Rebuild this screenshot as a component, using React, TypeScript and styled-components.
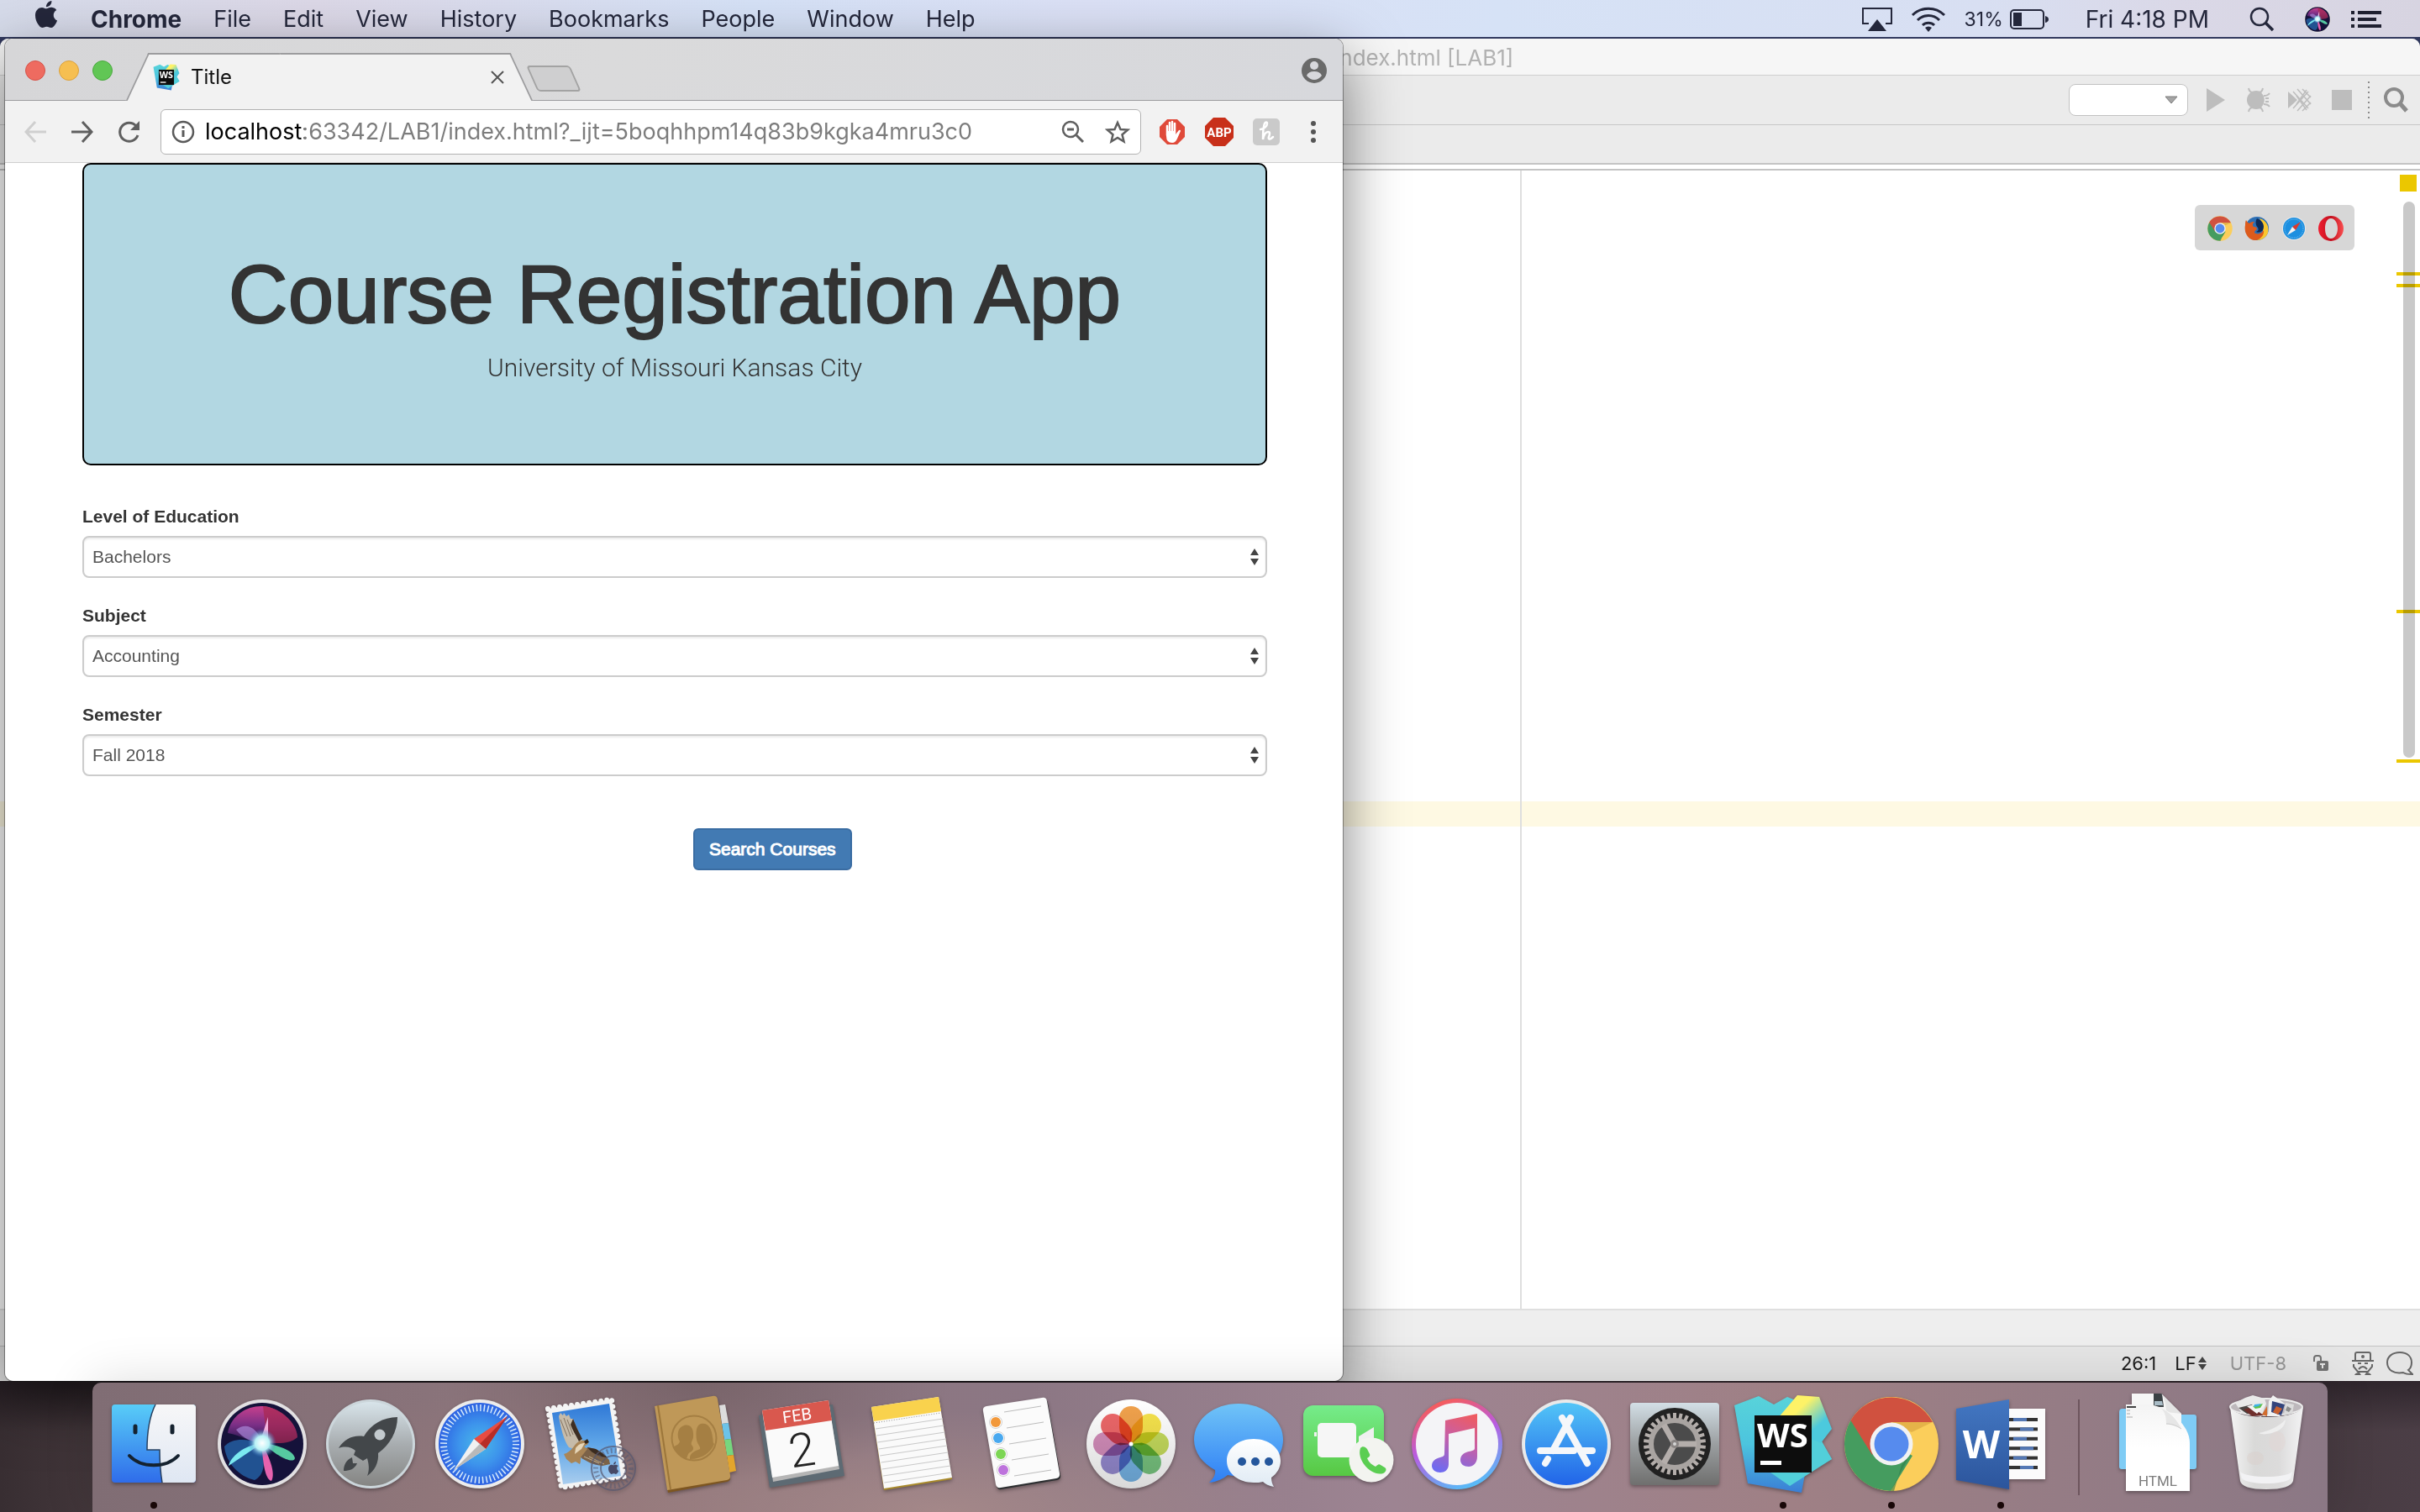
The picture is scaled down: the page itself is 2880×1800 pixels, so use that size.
import React from 'react';
import styled, { createGlobalStyle } from 'styled-components';

const systemFont = 'Inter, "Noto Sans", sans-serif';
const pageFont = '"Liberation Sans", Arial, sans-serif';

const GlobalStyle = createGlobalStyle`
  *, *::before, *::after { box-sizing: border-box; }
  body { margin: 0; font-family: ${systemFont}; }
  button, input, select { font: inherit; color: inherit; margin: 0; }
`;

/* ---------- desktop ---------- */

const Desktop = styled.div`
  position: relative;
  height: 100vh;
  overflow: hidden;
  display: flex;
  flex-direction: column;
  justify-content: space-between;
  background:
    linear-gradient(180deg, rgba(20, 14, 20, 0.5) 0, rgba(20, 14, 20, 0) 60px) bottom / 100% 156px no-repeat,
    linear-gradient(90deg, #382e32 0, #43373b 4%, #43373b 90%, #4b3e46 100%) bottom / 100% 156px no-repeat,
    linear-gradient(180deg, #34416c 0, #2b2a45 120px, #2b2328 100%);
`;

const MenuBar = styled.header`
  height: 44px;
  padding: 2px 46px 0 40px;
  display: flex;
  align-items: center;
  justify-content: space-between;
  color: #24273b;
  font-size: 27px;
  line-height: 42px;
  background: linear-gradient(90deg, #d6dbea 0, #dcd8e7 13%, #d5e1f6 31%, #dbe0f5 45%, #d6e2f6 62%, #d8dff2 82%, #dad8e7 90%, #d7d4e1 100%);
`;

const MenuList = styled.nav`
  display: flex;
  align-items: center;
  gap: 38px;
`;

const MenuItem = styled.button<{ $strong?: boolean }>`
  border: 0;
  padding: 0;
  background: none;
  line-height: 42px;
  font-size: ${(p) => (p.$strong ? 28 : 27)}px;
  font-weight: ${(p) => (p.$strong ? 700 : 400)};
`;

const StatusList = styled.div`
  display: flex;
  align-items: center;
`;

const StatusItem = styled.span<{ $after: number; $muted?: boolean; $gap?: number }>`
  display: flex;
  align-items: center;
  gap: ${(p) => p.$gap ?? 8}px;
  margin-right: ${(p) => p.$after}px;
  color: ${(p) => (p.$muted ? '#979797' : 'inherit')};
`;

const Small = styled.span`
  font-size: 23px;
`;

const Clock = styled.time`
  font-size: 28px;
`;

/* ---------- editor window ---------- */

const EditorWindow = styled.section`
  position: absolute;
  inset: 46px 0 156px 0;
  display: flex;
  flex-direction: column;
  border-radius: 10px 10px 0 0;
  overflow: hidden;
  background: #fff;
`;

const EditorTitle = styled.div`
  height: 44px;
  padding-left: 1588px;
  border-bottom: 1px solid #cfcfcf;
  background: #f6f6f6;
  color: #b2b2b2;
  font-size: 26px;
  line-height: 46px;
`;

const EditorToolbar = styled.div`
  height: 59px;
  padding: 0 4px;
  display: flex;
  align-items: center;
  justify-content: flex-end;
  border-bottom: 1px solid #c6c6c6;
  background: #ebebeb;
`;

const ConfigBox = styled.div`
  display: grid;
  width: 142px;
  height: 38px;
  margin-right: 8px;
  > * { grid-area: 1 / 1; }
  > svg { justify-self: end; align-self: center; margin-right: 12px; pointer-events: none; }
`;

const ConfigSelect = styled.select`
  appearance: none;
  border: 1px solid #c2c2c2;
  border-radius: 8px;
  background: #fff;
`;

const EditorTool = styled.button`
  width: 50px;
  height: 40px;
  border: 0;
  padding: 0;
  background: none;
  display: grid;
  place-items: center;
`;

const DottedRule = styled.span`
  width: 2px;
  height: 44px;
  margin: 0 6px;
  background: repeating-linear-gradient(180deg, #8c8c8c 0 2px, transparent 2px 6px);
`;

const EditorTabs = styled.div`
  height: 47px;
  border-bottom: 2px solid #c4c4c4;
  background: #ebebeb;
`;

const EditorGap = styled.div`
  height: 7px;
  border-bottom: 2px solid #c4c4c4;
`;

const EditorBody = styled.div`
  position: relative;
  flex: 1;
`;

const CaretRow = styled.div`
  position: absolute;
  inset: 751px 0 auto 0;
  height: 30px;
  background: #fef9e3;
`;

const MarginGuide = styled.div`
  position: absolute;
  inset: 0 auto 0 1809px;
  width: 2px;
  background: #dedede;
`;

const BrowserPanel = styled.div`
  position: absolute;
  top: 41px;
  right: 78px;
  padding: 13px 12px 11px 14px;
  display: flex;
  gap: 12px;
  border-radius: 6px;
  background: #d7d7d7;
`;

const PanelButton = styled.button`
  width: 32px;
  height: 30px;
  border: 0;
  padding: 0;
  background: none;
  display: grid;
  place-items: center;
`;

const ScrollThumb = styled.div`
  position: absolute;
  top: 37px;
  right: 6px;
  width: 14px;
  height: 662px;
  border-radius: 7px;
  background: #c9c9c9;
`;

const StatusSquare = styled.div`
  position: absolute;
  top: 5px;
  right: 4px;
  width: 20px;
  height: 20px;
  background: #ebc700;
`;

const Mark = styled.div<{ $top: number }>`
  position: absolute;
  top: ${(p) => p.$top}px;
  right: 0;
  width: 28px;
  height: 4px;
  background: #ebc700;
  mix-blend-mode: multiply;
`;

const EditorPanelBar = styled.div`
  height: 45px;
  border-top: 2px solid #dfdfdf;
  border-bottom: 1px solid #c2c2c2;
  background: #eeeeee;
`;

const EditorStatus = styled.footer`
  height: 41px;
  padding-right: 8px;
  display: flex;
  align-items: center;
  justify-content: flex-end;
  border-bottom: 1px solid #f4f4f4;
  background: #e5e5e5;
  color: #1b1b1b;
  font-size: 22px;
`;

/* ---------- browser window ---------- */

const BrowserWindow = styled.section`
  position: absolute;
  inset: 46px auto 156px 6px;
  width: calc(55vw + 8px);
  display: flex;
  flex-direction: column;
  border-radius: 10px;
  overflow: hidden;
  background: #fff;
`;

const BrowserShadow = styled.div`
  position: absolute;
  inset: 46px auto 156px 6px;
  width: calc(55vw + 8px);
  border-radius: 10px;
  box-shadow: 0 0 0 1px rgba(0, 0, 0, 0.35), 0 24px 70px rgba(0, 0, 0, 0.5);
`;

const TabStrip = styled.div`
  height: 74px;
  padding: 0 18px 0 24px;
  display: flex;
  align-items: center;
  border-bottom: 1px solid #9c9c9e;
  background: linear-gradient(90deg, #d6d6d8, #dadadb 45%, #d7d8dc);
`;

const TrafficLights = styled.div`
  display: flex;
  gap: 16px;
  padding-top: 3px;
`;

const Light = styled.button<{ $fill: string; $edge: string }>`
  width: 24px;
  height: 24px;
  padding: 0;
  border: 1px solid ${(p) => p.$edge};
  border-radius: 50%;
  background: ${(p) => p.$fill};
`;

const Tab = styled.div`
  position: relative;
  align-self: flex-end;
  width: 458px;
  height: 57px;
  margin: 0 0 -1px 29px;
  padding: 0 21px 0 19px;
  display: flex;
  align-items: center;
  gap: 13px;
  font-size: 24px;
  color: #111;
  &::before, &::after {
    content: '';
    position: absolute;
    top: 0;
    bottom: 0;
    width: 60%;
    border-top: 2px solid #9c9c9e;
    background: #f2f2f2;
  }
  &::before { left: 0; border-left: 2px solid #9c9c9e; transform: skewX(-25deg); }
  &::after { right: 0; border-right: 2px solid #9c9c9e; transform: skewX(25deg); }
  > * { position: relative; z-index: 1; }
`;

const TabTitle = styled.span`
  flex: 1;
`;

const IconButton = styled.button`
  border: 0;
  padding: 0;
  background: none;
  display: grid;
  place-items: center;
`;

const NewTab = styled.button`
  width: 52px;
  height: 31px;
  margin: 22px auto 0 12px;
  border: 2px solid #a3a3a3;
  border-radius: 4px;
  background: #cfcfd0;
  transform: skewX(24deg);
`;

const Toolbar = styled.div`
  height: 74px;
  padding: 0 7px 0 8px;
  display: flex;
  align-items: center;
  border-bottom: 1px solid #cfcfcf;
  background: #f2f2f2;
`;

const ToolButton = styled(IconButton)`
  width: 56px;
  height: 54px;
`;

const Omnibox = styled.div`
  flex: 1;
  height: 54px;
  margin: 0 9px;
  padding: 0 12px;
  display: flex;
  align-items: center;
  gap: 12px;
  border: 1px solid #b2b2b2;
  border-radius: 6px;
  background: #fff;
`;

const Address = styled.input`
  flex: 1;
  min-width: 0;
  height: 40px;
  border: 0;
  padding: 0;
  outline: 0;
  font-size: 27px;
  color: transparent;
  background: linear-gradient(90deg, #000 118px, #7c7c7c 118px);
  background-clip: text;
`;

const OmniActions = styled.div`
  display: flex;
  align-items: center;
  gap: 24px;
`;

/* ---------- page ---------- */

const Page = styled.main`
  flex: 1;
  padding: 0 90px 0 92px;
  font-family: ${pageFont};
  font-size: 21px;
  line-height: 30px;
  color: #333;
`;

const Hero = styled.div`
  padding: 100px 40px 92px;
  border: 2px solid #000;
  border-radius: 10px;
  background: #b2d7e2;
  text-align: center;
`;

const HeroTitle = styled.h1`
  margin: 0;
  font-size: 98px;
  line-height: 108px;
  font-weight: 400;
  -webkit-text-stroke: 2px #333;
`;

const HeroText = styled.p`
  margin: 12px 0 0;
  font-family: Roboto, sans-serif;
  font-size: 30px;
  line-height: 44px;
  font-weight: 300;
`;

const Form = styled.form`
  padding-top: 46px;
`;

const Field = styled.div`
  display: flex;
  flex-direction: column;
  gap: 8px;
  margin-bottom: 30px;
`;

const FieldLabel = styled.label`
  font-weight: 700;
`;

const SelectBox = styled.div`
  display: grid;
  > * { grid-area: 1 / 1; }
  > svg { justify-self: end; align-self: center; margin-right: 10px; pointer-events: none; }
`;

const FieldSelect = styled.select`
  appearance: none;
  height: 50px;
  padding: 0 12px 0 10px;
  border: 2px solid #ccc;
  border-radius: 8px;
  background: #fff;
  color: #555;
  box-shadow: inset 0 2px 2px rgba(0, 0, 0, 0.08);
`;

const FormActions = styled.div`
  padding-top: 32px;
  margin-left: calc(50% + 22px);
`;

const SubmitButton = styled.button`
  height: 50px;
  padding: 0 17px;
  border: 2px solid #3a6ca2;
  border-radius: 6px;
  background: #427ab3;
  color: #fff;
  -webkit-text-stroke: 1px #fff;
`;

/* ---------- dock ---------- */

const Dock = styled.footer`
  position: relative;
  height: 154px;
  margin: 0 110px;
  padding: 0 8px;
  display: flex;
  border-radius: 10px 10px 0 0;
  background:
    radial-gradient(ellipse 300px 120px at 27% 0, rgba(112, 92, 96, 0.7), transparent),
    radial-gradient(ellipse 420px 120px at 38% 100%, rgba(170, 140, 138, 0.8), transparent),
    radial-gradient(ellipse 420px 150px at 22% 100%, rgba(152, 122, 122, 0.8), transparent),
    linear-gradient(90deg, #806d74 0, #8c757c 20%, #8c7784 42%, #9d8492 58%, #9f8085 76%, #8b7885 100%);
  box-shadow: 0 0 60px rgba(0, 0, 0, 0.14);
`;

const DockButton = styled.button<{ $running?: boolean }>`
  flex: 1;
  min-width: 0;
  border: 0;
  padding: 0;
  background: none;
  display: flex;
  flex-direction: column;
  align-items: center;
  > svg { flex: none; filter: drop-shadow(0 2px 2px rgba(0, 0, 0, 0.35)); }
  &::after {
    content: '';
    flex: none;
    width: 8px;
    height: 8px;
    margin-top: 2px;
    border-radius: 50%;
    background: ${(p) => (p.$running ? '#180707' : 'transparent')};
  }
`;

const DockRule = styled.span`
  width: 58px;
  display: flex;
  justify-content: center;
  padding: 20px 0;
  &::before { content: ''; width: 2px; background: #6d555d; }
`;

/* ---------- drawings ---------- */

const Art = ({ w, h, box, children }: { w: number; h: number; box?: string; children: React.ReactNode }) => (
  <svg width={w} height={h} viewBox={box ?? `0 0 ${w} ${h}`} fill="none" aria-hidden="true">
    {children}
  </svg>
);

const Grad = ({ id, stops, h, r }: { id: string; stops: string[]; h?: boolean; r?: boolean }) => {
  const list = stops.map((c, i) => <stop key={i} offset={i / (stops.length - 1)} stopColor={c} />);
  return (
    <defs>
      {r ? <radialGradient id={id}>{list}</radialGradient> : (
        <linearGradient id={id} x1="0" y1="0" x2={h ? 1 : 0} y2={h ? 0 : 1}>{list}</linearGradient>
      )}
    </defs>
  );
};

const APPLE = 'M788 340c-6 5-108 62-108 190 0 148 130 200 134 202-1 3-21 72-69 142-43 62-88 124-156 124s-86-40-165-40c-77 0-104 41-167 41s-106-57-156-128C43 788 0 662 0 542c0-193 125-295 249-295 66 0 120 43 162 43 39 0 101-46 176-46 28 0 130 3 201 96zM554 159c31-37 53-88 53-139 0-7-1-14-2-20-50 2-110 33-146 75-28 32-55 83-55 135 0 8 1 16 2 18 3 1 8 1 14 1 45 0 102-30 134-70z';

const WSMark = ({ p }: { p: string }) => (
  <>
    <Grad id={`${p}a`} stops={['#58d3da', '#4cc4de', '#3a7ed6']} />
    <defs>
      <linearGradient id={`${p}b`} x1="0" y1="0.3" x2="0.8" y2="1"><stop offset="0.3" stopColor="#fdf267" /><stop offset="0.75" stopColor="#4cc9dd" /></linearGradient>
    </defs>
    <path d="M7 27 36 16l18 10 16-9 30 12 10 40 13 22-32 18-4 22-64-11z" fill={`url(#${p}a)`} />
    <path d="M123 91 73 123 40 100l60-50z" fill="#52cfda" />
    <path d="M54 48 82 15l26 2 15 38-13 17z" fill={`url(#${p}b)`} />
    <rect x="31" y="39" width="68" height="68" fill="#0d0d0d" />
    <text x="34" y="77" fontFamily="Open Sans, sans-serif" fontWeight="700" fontSize="40" fill="#fff">WS</text>
    <rect x="38" y="93" width="25" height="5" fill="#fff" />
  </>
);

const ChromeMark = () => (
  <>
    <circle cx="65" cy="73" r="56" fill="#fbce5b" />
    <path d="M16.500 45A56 56 0 0 0 64 129l26-42-25-14z" fill="#459c5f" />
    <path d="M16.500 45A56 56 0 0 1 114 47H65L42 86z" fill="#d0513f" />
    <path d="M114 47H65l24 12z" fill="#e0ad45" opacity="0.8" />
    <path d="M64 129 87 86l-10 12-9 31z" fill="#2f7d48" opacity="0.6" />
    <circle cx="65" cy="73" r="25.500" fill="#f2f2f2" />
    <circle cx="65" cy="73" r="20.500" fill="#568bee" />
  </>
);

const SafariMark = ({ p }: { p: string }) => (
  <>
    <Grad id={p} r stops={['#49b9e8', '#3d94ec', '#2d62e2']} />
    <circle cx="65" cy="73" r="53" fill="#ececec" />
    <circle cx="65" cy="73" r="49" fill={`url(#${p})`} />
    <circle cx="65" cy="73" r="43" stroke="#d8ebfb" strokeWidth="8" strokeDasharray="1.500 3" />
    <path d="M98 40 58 67l14 12z" fill="#e84c41" />
    <path d="M98 40 65 73l7 6z" fill="#b82d27" />
    <path d="M34 104 58 67l14 12z" fill="#f1f1f1" />
    <path d="M34 104 65 73l7 6z" fill="#b9b9b9" />
  </>
);

const SiriMark = ({ p }: { p: string }) => (
  <>
    <Grad id={`${p}r`} r stops={['#ffffff', '#b9f2f6', 'rgba(60,120,200,0)']} />
    <Grad id={`${p}p`} stops={['#c7408d', '#7a2f86', '#1a1547']} />
    <circle cx="65" cy="73" r="53" fill="#e2e0e2" />
    <circle cx="65" cy="73" r="49" fill="#15123a" />
    <path d="M24 60C28 38 48 27 66 28s40 18 41 37c-10 8-30 8-42 8S40 62 24 60z" fill={`url(#${p}p)`} />
    <path d="M66 28c22 2 40 20 41 37-8 8-24 8-36 6z" fill="#a8284f" opacity="0.7" />
    <path d="M20 76c8-10 26-10 42-4 8 22 6 38-6 44-18-4-34-20-36-40z" fill="#2463a8" opacity="0.8" />
    <path d="M34 56c12-10 26-2 31 16-12-2-22-4-31-16z" fill="#b18fe0" opacity="0.65" />
    <path d="M65 72 25 99c2-10 18-25 40-27z" fill="#7be9f0" />
    <path d="M66 72c16 2 36 8 38 18-2 8-24-4-38-18z" fill="#56c9a0" />
    <path d="M64 72c8 12 18 36 12 45-8-2-10-24-12-45z" fill="#e662ae" />
    <path d="M62 72 72 41l0 31z" fill="#f3b4df" />
    <circle cx="65" cy="72" r="17" fill={`url(#${p}r)`} />
  </>
);

const petals = ['#f09a3c', '#f6e13c', '#c0d84e', '#6cbf74', '#6aaee4', '#8c80cc', '#cf83b4', '#ec5a5c'];

const gearTeeth = Array.from({ length: 30 }, (_, i) => i * 12);

const dockLeft: { name: string; running?: boolean; art: React.ReactNode }[] = [
  {
    name: 'Finder', running: true, art: (
      <>
        <Grad id="fa" stops={['#58cdf8', '#2f6cea']} /><Grad id="fb" stops={['#f7f7f8', '#dfe7f3']} />
        <rect x="15" y="26" width="100" height="93" rx="4" fill="url(#fa)" />
        <path d="M67 26h44a4 4 0 0 1 4 4v85a4 4 0 0 1-4 4H75c-2-12-3-26-3-39H57c0-20 3-40 10-54z" fill="url(#fb)" />
        <path d="M67 26c-7 14-10 34-10 54h15c0 13 1 27 3 39" stroke="#27405f" strokeWidth="1.500" />
        <path d="M43 52v7M87 52v7" stroke="#15222f" strokeWidth="5" strokeLinecap="round" />
        <path d="M36 87c14 15 44 15 58 0" stroke="#15222f" strokeWidth="4" strokeLinecap="round" />
      </>
    ),
  },
  { name: 'Siri', art: <SiriMark p="s1" /> },
  {
    name: 'Launchpad', art: (
      <>
        <Grad id="la" stops={['#d8e4ea', '#a8adb0', '#858583']} />
        <circle cx="65" cy="73" r="53" fill="#ccd6db" /><circle cx="65" cy="73" r="50" fill="url(#la)" />
        <path d="M97 41C80 41 65 50 57 64 44 62 34 67 27 78c8-3 16-1 20 3l-2 5 11 7 5-3c2 7 3 14 0 21 9-6 14-16 13-27 14-10 23-26 23-43z" fill="#43474a" />
        <path d="M43 89c-7 3-10 9-10 16 7 0 13-2 16-9l-5 0z" fill="#43474a" />
        <circle cx="76" cy="62" r="6.500" fill="#c3cace" />
      </>
    ),
  },
  { name: 'Safari', art: <SafariMark p="sf" /> },
  {
    name: 'Mail', art: (
      <>
        <Grad id="ma" stops={['#2f78d6', '#5fa6e8', '#a9cdee']} />
        <path d="M17 31 93 20l15 92-75 13z" fill="#f4f4f4" />
        <path d="M17 31 93 20l15 92-75 13z" stroke="#f4f4f4" strokeWidth="6" strokeDasharray="0.100 7" strokeLinecap="round" />
        <path d="M22 36 90 25l14 86-69 10z" fill="url(#ma)" />
        <path d="M30 40l2-4 3 3 1-3 3 4 3-2 2 5 3 0 5 12 6 14-10 10-6-2c-6-8-10-24-12-37z" fill="#c6bba9" />
        <path d="M47 43l5 12 6 12-4 3c-4-8-8-14-10-20z" fill="#3e2e22" />
        <path d="M32 44l8 20M36 42l8 22M40 44l7 18" stroke="#837362" strokeWidth="1" />
        <path d="M64 77l10 2 8 5 8 8 1 5-9 2c-10-1-20-5-27-11z" fill="#7b6248" />
        <path d="M64 77l10 2 8 5 6 5c-8 0-18-4-24-12z" fill="#3a2b20" />
        <path d="M60 88l18 8M66 88l18 9" stroke="#c4b396" strokeWidth="1" />
        <path d="M48 76c4-6 8-8 16-7l1 4-5 3 4 3-8 10c0 4 0 6-1 8l-5-3-5 2-6-5-3-6c4-1 8-4 12-9z" fill="#a98556" />
        <path d="M50 78c3-4 6-6 11-6l-4 7-8 6z" fill="#e6d6b8" />
        <path d="M60 70l4-3 2 4-4 2z" fill="#2f241b" />
        <circle cx="95" cy="102" r="26" stroke="#56576f" strokeWidth="2" opacity="0.7" />
        <circle cx="95" cy="102" r="15" stroke="#56576f" strokeWidth="2" opacity="0.7" />
        <circle cx="95" cy="102" r="21" stroke="#56576f" strokeWidth="6" strokeDasharray="2 3" opacity="0.55" />
        <path d={APPLE} transform="translate(89 94) scale(0.015)" fill="#474a66" />
      </>
    ),
  },
  {
    name: 'Contacts', art: (
      <>
        <path d="M92 27l7-1 4 22-8 1z" fill="#dcdcdc" /><path d="M95 49l8-1 3 19-8 1z" fill="#6cc3e8" />
        <path d="M98 68l8-1 3 19-8 1z" fill="#76d67e" /><path d="M101 87l8-1 3 19-8 2z" fill="#e3a52c" />
        <path d="M16 30 84 18q5-1 6 4l15 90q1 5-4 6L31 131z" fill="#7d5621" />
        <path d="M15 28 84 16q5-1 6 4l15 90q1 5-4 6L30 128z" fill="#bf9858" />
        <path d="M19 27l15 100" stroke="#9c763a" strokeWidth="2" />
        <circle cx="62" cy="66" r="26.500" stroke="#a57f43" strokeWidth="2" />
        <path d="M50 51c8-2 12 4 11 14-1 5-3 6-2 9 3 3 3 7-2 9-2 1-3 4-4 8-8-3-13-8-16-14 4-3 7-3 8-7-4-6-3-17 5-19zM70 49c9-2 13 6 14 16 1 4 0 6 2 8-4 10-14 18-29 18-1-8 8-10 12-12 1-3-3-5-4-11-1-8-1-17 5-19z" fill="#a57f43" />
      </>
    ),
  },
  {
    name: 'Calendar', art: (
      <>
        <path d="M10 39 98 26l14 85-89 14z" fill="#5d6a73" />
        <path d="M16 36 93 24l13 79-79 15z" fill="#b5b5b5" />
        <path d="M14 33 93 21l12 78-79 14z" fill="#fafafa" />
        <path d="M14 33 93 21l4 24-79 12z" fill="#d9584e" />
        <g transform="rotate(-8 58 70)" fontFamily="Roboto, sans-serif" textAnchor="middle">
          <text x="60" y="46" fontSize="20" fill="#fff">FEB</text>
          <text x="60" y="100" fontSize="56" fontWeight="300" fill="#222">2</text>
        </g>
      </>
    ),
  },
  {
    name: 'Notes', art: (
      <>
        <path d="M14 30 94 18l16 97-81 13z" fill="#a98a2b" />
        <path d="M14 29 94 17l16 96-81 13z" fill="#fafafa" />
        <path d="M14 29 94 17l3 17-80 12z" fill="#f9d24d" />
        <path d="M17 48 97 36" stroke="#8d8d8d" strokeDasharray="1 2" />
        {[0, 1, 2, 3, 4, 5, 6, 7, 8].map((i) => (
          <path key={i} d={`M${19 + i * 1.3} ${55 + i * 8}l80-12`} stroke="#c9c9c9" />
        ))}
      </>
    ),
  },
  {
    name: 'Reminders', art: (
      <>
        <path d="M19 36q-1-5 4-6l66-10q5-1 6 4l15 86q1 5-4 6l-66 11q-5 1-6-4z" fill="#2c2e30" />
        <path d="M18 34q-1-5 4-6l66-10q5-1 6 4l15 86q1 5-4 6l-66 11q-5 1-6-4z" fill="#fbfbfb" />
        {['#f2983a', '#4aa9ef', '#7dd655', '#bd73dc'].map((c, i) => (
          <g key={c}>
            <circle cx={33 + i * 3} cy={47 + i * 19} r="7.500" stroke="#cfcfcf" fill="#fff" />
            <circle cx={33 + i * 3} cy={47 + i * 19} r="6" fill={c} />
            <path d={`M${46 + i * 3} ${54 + i * 19}l44-7`} stroke="#bcbcbc" />
          </g>
        ))}
        <path d="M43 35l44-7" stroke="#bcbcbc" />
      </>
    ),
  },
  {
    name: 'Photos', art: (
      <>
        <Grad id="pa" stops={['#ffffff', '#d9d9d9']} />
        <circle cx="65" cy="73" r="53" fill="url(#pa)" />
        {petals.map((c, i) => (
          <path key={c} transform={`translate(65 73) rotate(${i * 45})`} style={{ mixBlendMode: 'multiply' }} opacity="0.92"
            d="M0 0-10-8Q-14-14-14-20v-11a14 14 0 0 1 28 0v11q0 6-4 12z" fill={c} />
        ))}
        <circle cx="65" cy="73" r="2.500" fill="#fff" />
      </>
    ),
  },
  {
    name: 'Messages', art: (
      <>
        <Grad id="me" stops={['#70c4f7', '#2f7ff5']} /><Grad id="mf" stops={['#ffffff', '#dfeaf4']} />
        <path d="M63 25c30 0 53 19 53 43s-23 43-53 43c-4 0-9 0-13-1-6 5-13 8-22 9 5-5 8-9 7-15C20 96 10 83 10 68c0-24 23-43 53-43z" fill="url(#me)" />
        <path d="M81 67c18 0 32 11 32 26 0 8-4 15-11 20 0 4 1 8 3 11-6-1-10-3-13-6-3 1-7 1-11 1-18 0-32-11-32-26s14-26 32-26z" fill="url(#mf)" />
        <circle cx="67" cy="94" r="5" fill="#24569c" /><circle cx="83" cy="94" r="5" fill="#24569c" /><circle cx="99" cy="94" r="5" fill="#24569c" />
      </>
    ),
  },
  {
    name: 'FaceTime', art: (
      <>
        <Grad id="ft" stops={['#76ec8b', '#57c843']} />
        <rect x="11" y="27" width="96" height="84" rx="12" fill="url(#ft)" />
        <rect x="28" y="48" width="46" height="41" rx="5" fill="#f6f6f6" />
        <path d="M77 64 95 53v31L77 74zM24 59h3v5h-3z" fill="#f0f0f0" />
        <circle cx="92" cy="92" r="26.500" fill="#f3f4f0" />
        <path d="M79 78c2-3 6-2 8 1l3 6c1 2-1 4-3 5 2 5 6 8 10 10 2-2 4-4 6-2l5 3c3 2 1 6-2 7-14 4-32-16-27-30z" fill="#5bce52" />
      </>
    ),
  },
  {
    name: 'iTunes', art: (
      <>
        <defs>
          <linearGradient id="ia" x1="0.300" y1="0" x2="0.700" y2="1"><stop offset="0" stopColor="#fb5c50" /><stop offset="0.450" stopColor="#b95be0" /><stop offset="1" stopColor="#4fc4fa" /></linearGradient>
          <linearGradient id="ib" gradientUnits="userSpaceOnUse" x1="80" y1="37" x2="50" y2="107"><stop offset="0" stopColor="#ef5b60" /><stop offset="0.450" stopColor="#c85fa5" /><stop offset="1" stopColor="#6f6af0" /></linearGradient>
        </defs>
        <circle cx="65" cy="73" r="54" fill="url(#ia)" /><circle cx="65" cy="73" r="49" fill="#f4f4f7" />
        <path d="M51 45 89 37v51c0 8-5 12-10 12-6 0-10-3-10-8 0-6 5-9 10-10 4-1 7-1 7-4V54l-31 7v36c0 7-5 10-10 10s-10-3-10-8c0-6 5-9 10-10 4-1 5-2 5-5z" fill="url(#ib)" />
      </>
    ),
  },
  {
    name: 'App Store', art: (
      <>
        <Grad id="as" stops={['#52c5f7', '#2164e8']} />
        <circle cx="65" cy="73" r="53" fill="#e9e9e9" /><circle cx="65" cy="73" r="49" fill="url(#as)" />
        <path d="M70 42 49 81M60 42l30 54M34 81h40M84 81h12M43 91l-3 5" stroke="#f5f7fa" strokeWidth="8" strokeLinecap="round" />
      </>
    ),
  },
  {
    name: 'System Preferences', art: (
      <>
        <Grad id="sp" stops={['#d3dfe6', '#9b9fa1', '#6f6f6e']} />
        <rect x="12" y="24" width="106" height="98" rx="4" fill="url(#sp)" />
        <circle cx="65" cy="73" r="43" fill="#222" />
        {gearTeeth.map((a) => <rect key={a} x="63" y="36" width="4" height="8" fill="#b4aeab" transform={`rotate(${a} 65 73)`} />)}
        <circle cx="65" cy="73" r="28" stroke="#a9a4a1" strokeWidth="6" fill="#4b4b4b" />
        <path d="M65 73h26M65 73 52 50M65 73 52 96" stroke="#b4aeab" strokeWidth="7" />
        <circle cx="65" cy="73" r="5" fill="#8a8584" /><circle cx="65" cy="73" r="2" fill="#d5d5d5" />
      </>
    ),
  },
  { name: 'WebStorm', running: true, art: <WSMark p="w1" /> },
  { name: 'Chrome', running: true, art: <ChromeMark /> },
  {
    name: 'Word', running: true, art: (
      <>
        <Grad id="wa" stops={['#4377c2', '#2c559c']} />
        <rect x="70" y="31" width="48" height="84" fill="#fbfbfb" />
        {[0, 1, 2, 3, 4, 5].map((i) => (
          <g key={i}>
            <rect x="74" y={42 + i * 11.4} width="35" height="4" fill="#333" />
            <rect x={i % 2 ? 88 : 80} y={42 + i * 11.4} width="16" height="4" fill="#5478b4" />
          </g>
        ))}
        <path d="M12 31 75 20v107L12 116z" fill="url(#wa)" />
        <text x="42" y="90" textAnchor="middle" fontFamily="Open Sans, sans-serif" fontWeight="700" fontSize="46" fill="#fff">W</text>
      </>
    ),
  },
];

const dockRight: { name: string; art: React.ReactNode }[] = [
  {
    name: 'Downloads', art: (
      <>
        <Grad id="ha" stops={['#f4f4f4', '#ffffff', '#ffffff']} />
        <path d="M19 35q0-4 4-4h26l4 7h55q3 0 3 3v59q0 3-3 3H22q-3 0-3-3z" fill="#7fccf5" />
        <path d="M34 13h35l24 24v40H34z" fill="#f6f6f6" />
        <path d="M60 13h10l2 16H60z" fill="#3b4144" /><path d="M61 22h9l1 5H61z" fill="#a9bcc6" />
        <path d="M69 13c4 6 6 14 6 22l18 2z" fill="#e4e4e4" />
        <path d="M27 26h29c22 4 47 24 47 46v57H27z" fill="url(#ha)" />
        <path d="M68 30c6 4 7 12 7 19 6 0 12 2 18 6-5-11-14-20-25-25z" fill="#e6e6e6" />
        <path d="M75 49c6 0 12 2 18 6" stroke="#c9c9c9" />
        <path d="M28 29h11" stroke="#444" strokeWidth="2" /><path d="M28 33h4M28 37h4M28 41h7" stroke="#aaa" />
        <text x="65" y="123" textAnchor="middle" fontFamily="Roboto, sans-serif" fontSize="17" fill="#7d7d7d">HTML</text>
      </>
    ),
  },
  {
    name: 'Trash', art: (
      <>
        <Grad id="ta" h stops={['#f4f4f4', '#d9d9d8', '#dcdbdb', '#f3f3f4']} />
        <ellipse cx="65" cy="29" rx="43" ry="10" fill="#bdb8bc" stroke="#ececec" strokeWidth="2" />
        <path d="M28 24 40 18l9-3 14 4 2 6-6 16-24-6z" fill="#e9e9e9" />
        <path d="M32 30l16-4 10 12-16-1z" fill="#4a4644" />
        <path d="M38 32l10-3 14 10-14 1z" fill="#6f2f2c" />
        <path d="M42 28l14-3 8 1-10 11z" fill="#f4f4f4" />
        <path d="M49 28l12-3-3 5-6 1z" fill="#5dc24c" /><path d="M51 26l8-1-3 3-6 1z" fill="#3fb1e6" />
        <path d="M60 38l6-10v12z" fill="#d26c2d" />
        <path d="M68 22 73 15l14 10-6 15H67z" fill="#f1f1f1" />
        <path d="M72 22l15 4-4 13-12-4z" fill="#33447c" /><path d="M77 28l7 3-5 7-6-3z" fill="#c9602f" />
        <path d="M88 24l10 2-2 11-10 2z" fill="#dcdcdc" /><path d="M90 28l5 3-3 4-4-2z" fill="#8d8d8d" />
        <path d="M22 29c3 7 20 12 43 12s40-5 44-12L97 117q-3 10-32 10t-31-10z" fill="url(#ta)" />
        <path d="M56 60c10-2 22-6 32-16 0 8-8 16-22 17-4 1-8 0-10-1z" fill="#f3f3f3" opacity="0.8" />
        <path d="M36 114c8 8 50 8 58 0l2-8c-8 8-54 8-62 0z" fill="#f2f2f4" />
        <ellipse cx="52" cy="90" rx="10" ry="8" fill="#d9cfcb" opacity="0.5" /><ellipse cx="78" cy="70" rx="10" ry="12" fill="#e2d6d4" opacity="0.5" />
      </>
    ),
  },
];

const fields = [
  { id: 'level', label: 'Level of Education', value: 'Bachelors' },
  { id: 'subject', label: 'Subject', value: 'Accounting' },
  { id: 'semester', label: 'Semester', value: 'Fall 2018' },
];

const menus = ['File', 'Edit', 'View', 'History', 'Bookmarks', 'People', 'Window', 'Help'];

/* ---------- components ---------- */

const SystemMenu = () => (
  <MenuBar>
    <MenuList aria-label="Menu bar">
      <MenuItem aria-label="Apple menu">
        <Art w={30} h={32} box="0 0 814 1000"><path d={APPLE} fill="#24273b" /></Art>
      </MenuItem>
      <MenuItem $strong>Chrome</MenuItem>
      {menus.map((m) => <MenuItem key={m}>{m}</MenuItem>)}
    </MenuList>
    <StatusList>
      <StatusItem $after={22}>
        <Art w={36} h={30}><path d="M8 20H1V2h34v18h-7" stroke="#24273b" strokeWidth="2" /><path d="M18 15 29 29H7z" fill="#24273b" /></Art>
      </StatusItem>
      <StatusItem $after={22}>
        <Art w={42} h={32}>
          <path d="M2 11a27 27 0 0 1 38 0M8 17a18 18 0 0 1 26 0M14 23a10 10 0 0 1 14 0" stroke="#24273b" strokeWidth="3" />
          <path d="M17 26a6 6 0 0 1 8 0l-4 5z" fill="#24273b" />
        </Art>
      </StatusItem>
      <StatusItem $after={44}>
        <Small>31%</Small>
        <Art w={46} h={24}>
          <rect x="1" y="1" width="39" height="22" rx="4" stroke="#24273b" strokeWidth="2" />
          <rect x="4" y="4" width="10" height="16" fill="#24273b" /><path d="M42 8q4 1 4 4t-4 4z" fill="#24273b" />
        </Art>
      </StatusItem>
      <StatusItem $after={48}><Clock>Fri 4:18 PM</Clock></StatusItem>
      <StatusItem $after={35}>
        <Art w={30} h={30}><circle cx="12" cy="12" r="10" stroke="#24273b" strokeWidth="2.500" /><path d="m19 19 9 9" stroke="#24273b" strokeWidth="3.500" /></Art>
      </StatusItem>
      <StatusItem $after={24}>
        <Art w={32} h={32} box="12 20 106 106"><SiriMark p="s2" /></Art>
      </StatusItem>
      <Art w={36} h={22}><path d="M0 3h4M8 3h28M0 11h4M8 11h22M0 19h4M8 19h28" stroke="#1f2030" strokeWidth="4" /></Art>
    </StatusList>
  </MenuBar>
);

const Editor = () => (
  <EditorWindow>
    <EditorTitle>index.html [LAB1]</EditorTitle>
    <EditorToolbar>
      <ConfigBox>
        <ConfigSelect aria-label="Run configuration"><option></option></ConfigSelect>
        <Art w={16} h={10}><path d="M1 1h14L8 9z" fill="#a5a5a5" stroke="#7c7c7c" /></Art>
      </ConfigBox>
      <EditorTool aria-label="Run"><Art w={22} h={28}><path d="M0 0 22 14 0 28z" fill="#bdbdbd" /></Art></EditorTool>
      <EditorTool aria-label="Debug">
        <Art w={30} h={30}>
          <circle cx="13" cy="15" r="11" fill="#bdbdbd" /><path d="M20 6c5 5 5 13 0 18" stroke="#ebebeb" strokeWidth="2" />
          <path d="M4 1q1 5 5 5M21 1q-1 5-5 5M4 29q1-5 5-5M21 29q-1-5-5-5M22 10q5 0 7-3M24 13h4M24 17h4M22 20q5 0 7 3" stroke="#bdbdbd" strokeWidth="2" />
        </Art>
      </EditorTool>
      <EditorTool aria-label="Run with coverage">
        <Art w={28} h={28}>
          <path d="M0 4 11 14 0 24z" fill="#bdbdbd" />
          <path d="m6 4 18 20M11 1l16 18M6 24 24 4M11 27l16-18M17 1l10 10M17 27l10-10M10 9l12 17M10 19 22 2" stroke="#bdbdbd" strokeWidth="1.500" />
        </Art>
      </EditorTool>
      <EditorTool aria-label="Stop"><Art w={24} h={24}><rect width="24" height="24" fill="#bdbdbd" /></Art></EditorTool>
      <DottedRule />
      <EditorTool aria-label="Search"><Art w={30} h={30}><circle cx="13" cy="12" r="10" stroke="#8b8b8b" strokeWidth="4" /><path d="m20 19 8 9" stroke="#8b8b8b" strokeWidth="5" /></Art></EditorTool>
    </EditorToolbar>
    <EditorTabs />
    <EditorGap />
    <EditorBody>
      <CaretRow />
      <MarginGuide />
      <StatusSquare />
      <BrowserPanel>
        <PanelButton aria-label="Open in Chrome"><Art w={30} h={30} box="8 16 114 114"><ChromeMark /></Art></PanelButton>
        <PanelButton aria-label="Open in Firefox">
          <Art w={30} h={30}>
            <circle cx="15" cy="15" r="14" fill="#2c6fb5" /><path d="M18 3c8 2 12 10 10 17-2 6-8 9-13 9 8-6 10-16 3-26z" fill="#f9c72f" />
            <path d="M2 5c1 2 2 3 4 4 2-2 4-2 6-2-2 2-3 4-1 6 3 0 4 1 4 3-2 1-3 2-3 4 3 3 9 1 11-3 1 6-4 11-9 12C5 30-1 20 1 11c0-2 0-4 1-6z" fill="#dd5b1c" />
            <path d="M15 3c6 2 10 8 7 14-3 3-6 3-8 2 3-1 3-3 2-5-3-3-3-8-1-11z" fill="#0d2a55" />
          </Art>
        </PanelButton>
        <PanelButton aria-label="Open in Safari">
          <Art w={30} h={30}>
            <circle cx="15" cy="15" r="14" fill="#e8e8e8" /><circle cx="15" cy="15" r="13" fill="#1c8fe0" />
            <circle cx="15" cy="15" r="11" stroke="#7cc4f2" strokeDasharray="1 1" />
            <path d="M23 7 13 13l4 4z" fill="#dc3a2e" /><path d="M7 23l6-10 4 4z" fill="#f3f3f3" />
          </Art>
        </PanelButton>
        <PanelButton aria-label="Open in Opera">
          <Art w={30} h={30}>
            <Grad id="op" h stops={['#ef1f30', '#c20f1e', '#f94e50']} />
            <path fillRule="evenodd" d="M15 0a15 15 0 1 1 0 30 15 15 0 0 1 0-30zm0 3c-5 0-7 6-7 12s2 12 7 12 8-6 8-12-3-12-8-12z" fill="url(#op)" />
          </Art>
        </PanelButton>
      </BrowserPanel>
      <ScrollThumb />
      {[121, 135, 523, 701].map((t) => <Mark key={t} $top={t} />)}
    </EditorBody>
    <EditorPanelBar />
    <EditorStatus>
      <StatusItem $after={22}>26:1</StatusItem>
      <StatusItem $after={28} $gap={2}>
        <span>LF</span>
        <Art w={10} h={16}><path d="M5 0l5 7H0zM5 16l5-7H0z" fill="#444" /></Art>
      </StatusItem>
      <StatusItem $after={32} $muted>UTF-8</StatusItem>
      <StatusItem $after={28}>
        <Art w={18} h={20}>
          <path d="M1 8V4q0-3 3-3h2q3 0 3 3v4" stroke="#727272" strokeWidth="2" /><rect x="4" y="7" width="14" height="12" rx="2" fill="#727272" />
          <path d="M8 11h6M11 11v5" stroke="#e5e5e5" strokeWidth="2" />
        </Art>
      </StatusItem>
      <StatusItem $after={15}>
        <Art w={26} h={28}>
          <path d="M4 11V3q0-2 2-2h14q2 0 2 2v8M0 11h26" stroke="#666" strokeWidth="2" /><circle cx="13" cy="6" r="2" fill="#666" />
          <path d="M7 14h4M15 14h4" stroke="#666" strokeWidth="2" /><path d="M2 15v3l5 6h12l5-6v-3M8 21q5-6 10 0" stroke="#666" strokeWidth="2" />
          <path d="M3 28q1-3 6-3l2 3zM23 28q-1-3-6-3l-2 3z" fill="#666" />
        </Art>
      </StatusItem>
      <Art w={32} h={28}><path d="M16 1c9 0 14 5 14 12 0 4-1 7-4 9l5 5c-5 0-8 0-11-2C9 27 1 22 1 13 1 6 7 1 16 1z" stroke="#666" strokeWidth="2" /></Art>
    </EditorStatus>
  </EditorWindow>
);

const CourseForm = () => (
  <Page>
    <Hero>
      <HeroTitle>Course Registration App</HeroTitle>
      <HeroText>University of Missouri Kansas City</HeroText>
    </Hero>
    <Form onSubmit={(e) => e.preventDefault()}>
      {fields.map((f) => (
        <Field key={f.id}>
          <FieldLabel htmlFor={f.id}>{f.label}</FieldLabel>
          <SelectBox>
            <FieldSelect id={f.id}><option>{f.value}</option></FieldSelect>
            <Art w={10} h={20}><path d="M5 0l5 8H0zM5 20l5-8H0z" fill="#444" /></Art>
          </SelectBox>
        </Field>
      ))}
      <FormActions><SubmitButton type="submit">Search Courses</SubmitButton></FormActions>
    </Form>
  </Page>
);

const Browser = () => (
  <>
    <BrowserShadow />
    <BrowserWindow>
      <TabStrip>
        <TrafficLights>
          <Light aria-label="Close" $fill="#ee6b60" $edge="#d55248" />
          <Light aria-label="Minimize" $fill="#f6bf51" $edge="#dba13c" />
          <Light aria-label="Zoom" $fill="#61c655" $edge="#4aa93f" />
        </TrafficLights>
        <Tab>
          <Art w={32} h={32} box="5 13 120 120"><WSMark p="w2" /></Art>
          <TabTitle>Title</TabTitle>
          <IconButton aria-label="Close tab"><Art w={16} h={16}><path d="m1 1 14 14M15 1 1 15" stroke="#555" strokeWidth="2" /></Art></IconButton>
        </Tab>
        <NewTab aria-label="New tab" />
        <IconButton aria-label="Profile">
          <Art w={32} h={32}>
            <circle cx="16" cy="17" r="15" fill="#6a6a6a" /><circle cx="16" cy="11" r="5" fill="#d8d8dc" />
            <path d="M7 23q2-5 9-5t9 5q-4 5-9 5t-9-5z" fill="#d8d8dc" />
          </Art>
        </IconButton>
      </TabStrip>
      <Toolbar>
        <ToolButton aria-label="Back"><Art w={26} h={26}><path d="M26 13H2M13 1 2 13l11 12" stroke="#cfcfcf" strokeWidth="3" /></Art></ToolButton>
        <ToolButton aria-label="Forward"><Art w={26} h={26}><path d="M0 13h24M13 1l11 12-11 12" stroke="#5f5f5f" strokeWidth="3" /></Art></ToolButton>
        <ToolButton aria-label="Reload"><Art w={28} h={28}><path d="M24 18a11 11 0 1 1-2-11" stroke="#5f5f5f" strokeWidth="3" /><path d="M26 1v11H15z" fill="#5f5f5f" /></Art></ToolButton>
        <Omnibox>
          <Art w={28} h={28}><circle cx="14" cy="14" r="12" stroke="#5a5a5a" strokeWidth="2.500" /><path d="M14 12v8M14 7v3" stroke="#5a5a5a" strokeWidth="3" /></Art>
          <Address aria-label="Address" defaultValue="localhost:63342/LAB1/index.html?_ijt=5boqhhpm14q83b9kgka4mru3c0" />
          <OmniActions>
            <IconButton aria-label="Zoom level"><Art w={28} h={28}><circle cx="11" cy="11" r="9" stroke="#5f5f5f" strokeWidth="2.500" /><path d="M7 11h8M18 18l8 8" stroke="#5f5f5f" strokeWidth="3" /></Art></IconButton>
            <IconButton aria-label="Bookmark"><Art w={30} h={28}><path d="m15 3 3.500 8 8.500.6-6.500 5.600 2 8.300L15 21l-7.500 4.500 2-8.300L3 11.600l8.500-.6z" stroke="#5f5f5f" strokeWidth="2.500" /></Art></IconButton>
          </OmniActions>
        </Omnibox>
        <ToolButton aria-label="AdBlock">
          <Art w={32} h={32}>
            <path d="M10 1h12l9 9v12l-9 9H10l-9-9V10z" fill="#e04a3a" />
            <path d="M10 20V9M13 18V5M16 18V4M19 18V6" stroke="#fff" strokeWidth="2.500" strokeLinecap="round" />
            <path d="M9 15h11l0 4 4-5q2-1 2 1l-4 9q-2 5-6 5-7 0-7-8z" fill="#fff" />
          </Art>
        </ToolButton>
        <ToolButton aria-label="Adblock Plus">
          <Art w={34} h={34}>
            <path d="M10 0h14l10 10v14L24 34H10L0 24V10z" fill="#c8301a" />
            <text x="17" y="23" textAnchor="middle" fontFamily="Roboto, sans-serif" fontWeight="700" fontSize="15" fill="#fff">ABP</text>
          </Art>
        </ToolButton>
        <ToolButton aria-label="Honey">
          <Art w={32} h={32}>
            <rect width="32" height="32" rx="5" fill="#cacaca" />
            <path d="M9 13c5-1 8-4 8-7 0-2-2-2-3 0-2 4-2 12-2 19 1-5 3-9 6-9s2 3 1 6 1 4 5 0" stroke="#fff" strokeWidth="2.500" strokeLinecap="round" />
          </Art>
        </ToolButton>
        <ToolButton aria-label="Menu"><Art w={8} h={28}><circle cx="4" cy="4" r="3" fill="#555" /><circle cx="4" cy="14" r="3" fill="#555" /><circle cx="4" cy="24" r="3" fill="#555" /></Art></ToolButton>
      </Toolbar>
      <CourseForm />
    </BrowserWindow>
  </>
);

export default function App() {
  return (
    <Desktop>
      <GlobalStyle />
      <SystemMenu />
      <Editor />
      <Browser />
      <Dock>
        {dockLeft.map((d) => (
          <DockButton key={d.name} aria-label={d.name} $running={d.running}><Art w={130} h={140}>{d.art}</Art></DockButton>
        ))}
        <DockRule />
        {dockRight.map((d) => (
          <DockButton key={d.name} aria-label={d.name}><Art w={130} h={140}>{d.art}</Art></DockButton>
        ))}
      </Dock>
    </Desktop>
  );
}
